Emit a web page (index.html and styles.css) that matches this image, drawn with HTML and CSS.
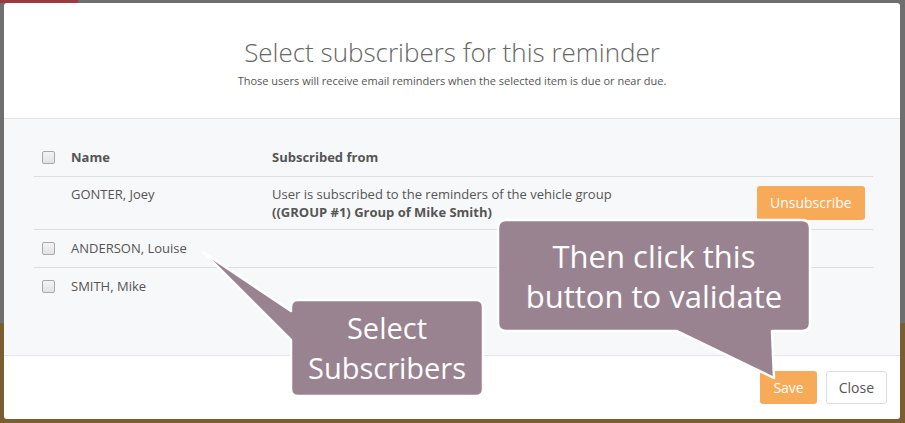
FILE: index.html
```html
<!DOCTYPE html>
<html lang="en">
<head>
    <meta charset="UTF-8">
    <meta name="viewport" content="width=device-width, initial-scale=1.0">
    <title>Select subscribers</title>
    <link rel="stylesheet" href="styles.css">
</head>
<body>

<div class="backdrop-tab"></div>

<div class="modal">
    <div class="modal-header">
        <h2 class="modal-title">Select subscribers for this reminder</h2>
        <p class="modal-subtitle">Those users will receive email reminders when the selected item is due or near due.</p>
    </div>

    <div class="modal-body">
        <div class="subscribers">
            <div class="row row-head">
                <div class="cell"><span class="check"></span></div>
                <div class="cell">Name</div>
                <div class="cell">Subscribed from</div>
                <div class="cell"></div>
            </div>
            <div class="row row-sub">
                <div class="cell"></div>
                <div class="cell">GONTER, Joey</div>
                <div class="cell">User is subscribed to the reminders of the vehicle group<br><b>((GROUP #1) Group of Mike Smith)</b></div>
                <div class="cell cell-action"><button class="btn btn-orange">Unsubscribe</button></div>
            </div>
            <div class="row">
                <div class="cell"><span class="check"></span></div>
                <div class="cell">ANDERSON, Louise</div>
                <div class="cell"></div>
                <div class="cell"></div>
            </div>
            <div class="row row-last">
                <div class="cell"><span class="check"></span></div>
                <div class="cell">SMITH, Mike</div>
                <div class="cell"></div>
                <div class="cell"></div>
            </div>
        </div>
    </div>

    <div class="modal-footer">
        <button class="btn btn-orange btn-save">Save</button>
        <button class="btn btn-default">Close</button>
    </div>
</div>

<!-- tutorial callouts drawn over the dialog -->
<svg class="callouts" width="905" height="423" viewBox="0 0 905 423">
    <path d="M298,300 H476 Q483,300 483,307 V389 Q483,396 476,396 H298 Q291,396 291,389 V340 L203,252 L291,311 V307 Q291,300 298,300 Z"/>
    <path d="M506,220 H802 Q810,220 810,228 V323 Q810,331 802,331 H772 L774,378 L677,331 H506 Q498,331 498,323 V228 Q498,220 506,220 Z"/>
</svg>
<div class="callout-text callout-select">Select<br>Subscribers</div>
<div class="callout-text callout-save">Then click this<br>button to validate</div>

</body>
</html>
```

FILE: styles.css
```css
body {
    margin: 0;
    width: 905px;
    height: 423px;
    overflow: hidden;
    position: relative;
    font-family: "Open Sans", Arial, sans-serif;
    font-size: 13px;
    color: #555;
    background: linear-gradient(to bottom, #6f6f6f 0, #6f6f6f 323px, #7a5e2f 323px);
}

.backdrop-tab {
    position: absolute;
    left: 0;
    top: 0;
    width: 78px;
    height: 3px;
    background: #9b3b3f;
}

.modal {
    position: relative;
    margin: 3px 0 0 4px;
    width: 896px;
    height: 416px;
    background: #fff;
    border-radius: 3px;
    overflow: hidden;
    display: flex;
    flex-direction: column;
}

.modal-header {
    height: 115px;
    border-bottom: 1px solid #e5e5e5;
    text-align: center;
}

.modal-title {
    margin: 31px 0 0;
    font-weight: 300;
    font-size: 26px;
    line-height: 36px;
    color: #666;
}

.modal-subtitle {
    margin: 3px 0 0;
    font-size: 11px;
    line-height: 16px;
    color: #555;
}

.modal-body {
    height: 236px;
    background: #f7f8fa;
    padding: 20px 27px 0 30px;
    box-sizing: border-box;
}

.row {
    display: grid;
    grid-template-columns: 29px 201px 1fr 124px;
    border-top: 1px solid #ddd;
}

.row-head {
    border-top: none;
    font-weight: bold;
}

.cell {
    padding: 9px 8px;
    line-height: 19px;
}

.row-sub .cell {
    padding: 8px;
    line-height: 18px;
}

.cell-action {
    text-align: right;
}

.check {
    display: inline-block;
    width: 11px;
    height: 11px;
    border: 1px solid #a9a9a9;
    border-radius: 2px;
    background: linear-gradient(#f4f4f4, #e2e2e2);
    vertical-align: -2px;
}

.btn {
    font-family: "Open Sans", Arial, sans-serif;
    font-size: 14px;
    border-radius: 3px;
    padding: 0 12px;
    height: 34px;
    line-height: 32px;
    border: 1px solid transparent;
}

.btn-orange {
    background: #f7aa57;
    color: #fff;
}

.row-sub .btn-orange {
    margin-top: 1px;
    margin-right: 1px;
}

.btn-default {
    background: #fff;
    color: #555;
    border-color: #ddd;
    height: 33px;
}

.modal-footer {
    flex: 1;
    border-top: 1px solid #e5e5e5;
    display: flex;
    justify-content: flex-end;
    align-items: flex-start;
    gap: 8px;
    padding: 15px 13px 0 0;
}

.btn-save {
    height: 33px;
    margin-right: 1px;
}

.callouts {
    position: absolute;
    left: 0;
    top: 0;
    pointer-events: none;
}

.callouts path {
    fill: #9a8391;
    stroke: #fff;
    stroke-width: 2.5;
    stroke-linejoin: round;
}

.callout-text {
    position: absolute;
    display: flex;
    align-items: center;
    justify-content: center;
    text-align: center;
    color: #fff;
    font-family: "Open Sans", Arial, sans-serif;
    line-height: 40px;
}

.callout-select {
    left: 291px;
    top: 300px;
    width: 192px;
    height: 96px;
    font-size: 29px;
}

.callout-save {
    left: 498px;
    top: 220px;
    width: 312px;
    height: 111px;
    font-size: 31px;
}
```
